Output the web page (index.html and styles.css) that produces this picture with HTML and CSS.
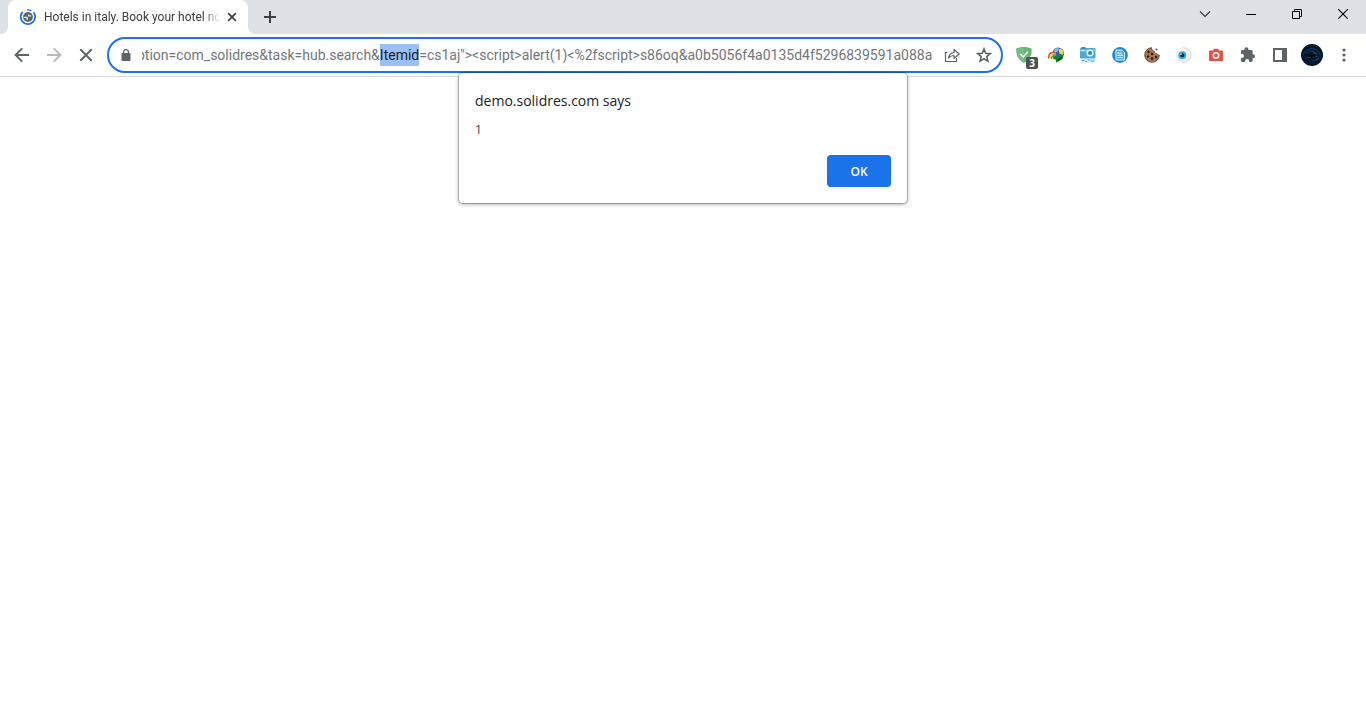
FILE: index.html
```
<!DOCTYPE html>
<html lang="en">
<head>
<meta charset="utf-8">
<title>Hotels in italy. Book your hotel now</title>
<link rel="stylesheet" href="styles.css">
</head>
<body>
<header class="tabstrip">
  <div class="tab">
    <svg class="favicon" width="16" height="16" viewBox="0 0 16 16"><path d="M2.800 2.800A7.200 7.200 0 1 0 13.500 3.300" fill="none" stroke="#1a73e8" stroke-width="1.800"/><path d="M7 .9A7 7 0 0 1 11.500 1.800" fill="none" stroke="#1a73e8" stroke-width="1.300"/><circle cx="8" cy="8" r="4.900" fill="#5f6368"/><path d="M4.200 8.300h2.800v1.800h1M8.500 5.400v1.400h2.700" fill="none" stroke="#e8eaed" stroke-width="1.200"/></svg>
    <span class="tab-title">Hotels in italy. Book your hotel now</span>
    <button class="tab-close" aria-label="Close tab"><svg width="10" height="10" viewBox="0 0 10 10"><path d="M1.2 1.2l7.6 7.6M8.8 1.2L1.2 8.8" stroke="#3c4043" stroke-width="1.7"/></svg></button>
  </div>
  <button class="new-tab" aria-label="New tab"><svg width="12" height="12" viewBox="0 0 12 12"><path d="M6 0v12M0 6h12" stroke="#3c4043" stroke-width="2"/></svg></button>
  <div class="window-controls">
    <button aria-label="Search tabs"><svg width="12" height="12" viewBox="0 0 12 12"><path d="M1 3.5l5 5 5-5" fill="none" stroke="#333" stroke-width="1.1"/></svg></button>
    <button aria-label="Minimize"><svg width="10" height="10" viewBox="0 0 10 10"><path d="M0 5.5h10" stroke="#000"/></svg></button>
    <button aria-label="Restore"><svg width="10" height="10" viewBox="0 0 10 10"><path d="M.5 2.5h7v7h-7zM2.5 2.5v-2h7v7h-2" fill="none" stroke="#000"/></svg></button>
    <button aria-label="Close"><svg width="10" height="10" viewBox="0 0 10 10"><path d="M0 0l10 10M10 0L0 10" stroke="#000" stroke-width="1.1"/></svg></button>
  </div>
</header>

<nav class="toolbar">
  <button class="tool" aria-label="Back"><svg width="16" height="16" viewBox="0 0 16 16"><path d="M15 8H2M8.2 1.4L1.6 8l6.6 6.6" fill="none" stroke="#5f6368" stroke-width="2"/></svg></button>
  <button class="tool" aria-label="Forward"><svg width="16" height="16" viewBox="0 0 16 16"><path d="M1 8h13M7.8 1.4L14.4 8l-6.6 6.6" fill="none" stroke="#bababa" stroke-width="2"/></svg></button>
  <button class="tool" aria-label="Stop loading"><svg width="14" height="14" viewBox="0 0 14 14"><path d="M1.3 1.3l11.4 11.4M12.7 1.3L1.3 12.7" stroke="#5f6368" stroke-width="2"/></svg></button>
  <div class="omnibox">
    <svg class="lock" width="10" height="12" viewBox="0 0 10 12"><rect x=".5" y="4" width="9" height="8" rx="1" fill="#5f6368"/><path d="M2.6 5V3a2.4 2.4 0 0 1 4.8 0v2" fill="none" stroke="#5f6368" stroke-width="1.2"/></svg>
    <input class="address" id="address" type="text" aria-label="Address" spellcheck="false" value="option=com_solidres&amp;task=hub.search&amp;Itemid=cs1aj&quot;&gt;&lt;script&gt;alert(1)&lt;%2fscript&gt;s86oq&amp;a0b5056f4a0135d4f5296839591a088a">
    <button class="box-action" aria-label="Share"><svg width="16" height="16" viewBox="0 0 16 16"><path d="M3.5 5.5h-2v9h11V11" fill="none" stroke="#5f6368" stroke-width="1.2"/><path d="M4.5 11c.5-3.500 2.500-5.300 5.500-5.500V2.500L15.200 7 10 11.300V8.500C7.500 8.500 6 9.300 4.500 11z" fill="none" stroke="#5f6368" stroke-width="1.2" stroke-linejoin="round"/></svg></button>
    <button class="box-action" aria-label="Bookmark this tab"><svg width="16" height="16" viewBox="0 0 16 16"><path d="M8 2l1.700 4.200 4.600.4-3.500 3 1.100 4.500L8 11.700l-3.900 2.400 1.100-4.500-3.500-3 4.600-.4z" fill="none" stroke="#5f6368" stroke-width="1.600"/></svg></button>
  </div>
  <div class="extensions">
    <button class="tool guard" aria-label="Ad blocker, 3 blocked"><svg width="16" height="16" viewBox="0 0 16 16"><path d="M8 0c2.500 0 5.500.6 7.700 1.700 0 6-1.200 10.500-7.700 14.300C1.500 12.200.3 7.700.3 1.700 2.500.6 5.500 0 8 0z" fill="#67b279"/><path d="M8 0v16C1.500 12.200.3 7.700.3 1.700 2.500.6 5.500 0 8 0z" fill="#74bd85"/><path d="M4.300 7l3 3 4.800-5.500" fill="none" stroke="#fff" stroke-width="1.500"/></svg><span class="badge">3</span></button>
    <button class="tool" aria-label="Download manager"><svg width="16" height="16" viewBox="0 0 16 16"><circle cx="10.200" cy="6" r="5.600" fill="#2b62ae"/><path d="M5.500 4C7 1.500 9 .7 11 1.200L10 4 7 6z" fill="#8db9e4"/><path d="M10.500 2.500l2.500-1 2.300 2.500-.6 4-3.200-1.500z" fill="#e2dc55"/><path d="M.8 11.500C0 7 3.500 4.300 7.500 6" fill="none" stroke="#e0502e" stroke-width="1.500"/><path d="M2.200 11.700C1.600 8.500 4.500 6 8 7.200" fill="none" stroke="#f3d53c" stroke-width="1.400"/><path d="M3.600 12c-.3-2.500 1.800-4.300 4.500-3.500" fill="none" stroke="#3fb35f" stroke-width="1.500"/><path d="M5.500 8.500l4 1.500L16 7l-1.500 5L8 15.800V13l-3-1.500z" fill="#13891f"/><path d="M9.500 12.500l5-3.500-1 3-4 2.500z" fill="#07460e"/></svg></button>
    <button class="tool" aria-label="Screenshot"><svg width="16" height="16" viewBox="0 0 16 16"><rect x="0" y="1" width="15.500" height="10.500" rx="1" fill="#4aa9d5"/><path d="M0 2.500h15.500v2H0z" fill="#83cbe5"/><rect x="1.500" y="0" width="4" height="2" fill="#2e8dbc"/><circle cx="10" cy="6" r="3.600" fill="#e9f7fc"/><circle cx="10" cy="6" r="2" fill="#2487b8"/><path d="M1.500 3.500h3" stroke="#e9f7fc"/><rect x="1" y="12" width="14" height="3.500" fill="#c7e8f3"/><path d="M2 13.500h2M5 14.500h2M8 13h2M11 14h3" stroke="#5daed0"/></svg></button>
    <button class="tool" aria-label="Notes"><svg width="16" height="16" viewBox="0 0 16 16"><circle cx="8" cy="8" r="7.900" fill="#2189df"/><path d="M4 3h6l2.500 2.500V13H4z" fill="#53acef" stroke="#e3f4ff"/><path d="M5.500 6h4M5.500 8.300h5.500M5.500 10.500h5.500" stroke="#fff"/></svg></button>
    <button class="tool" aria-label="Cookie editor"><svg width="16" height="16" viewBox="0 0 16 16"><path d="M7.500.7A7.300 7.300 0 1 0 15.300 8c-1.200.3-2.300-.3-2.600-1.300-1.500.2-2.600-.9-2.400-2.300C8.500 4 7.300 2.500 7.500.7z" fill="#ad7552" stroke="#4e3024" stroke-width=".8"/><g fill="#291711"><circle cx="4.500" cy="5" r="1.200"/><circle cx="8" cy="7" r="1.200"/><circle cx="4" cy="9.500" r="1.200"/><circle cx="8" cy="11.500" r="1.300"/><circle cx="12" cy="10" r="1.200"/></g><circle cx="12.500" cy="2.500" r="1" fill="#87553c"/></svg></button>
    <button class="tool" aria-label="Watcher"><svg width="16" height="16" viewBox="0 0 16 16"><circle cx="8" cy="8" r="7.300" fill="#eee" stroke="#d4d4d4" stroke-width=".7"/><circle cx="6.500" cy="7" r="5.500" fill="#f9f9f9"/><circle cx="6.300" cy="8.300" r="4" fill="#38a7df"/><circle cx="6.300" cy="8.300" r="2" fill="#0d273a"/><circle cx="5" cy="7.300" r=".8" fill="#fff"/></svg></button>
    <button class="tool" aria-label="Capture"><svg width="14" height="14" viewBox="0 0 14 14"><path d="M1 2.500h2.700L5 .8h4l1.300 1.700H13a1 1 0 0 1 1 1V12a1 1 0 0 1-1 1H1a1 1 0 0 1-1-1V3.500a1 1 0 0 1 1-1z" fill="#e94f43"/><circle cx="7" cy="7.500" r="2.700" fill="none" stroke="#fff" stroke-width="1.500"/></svg></button>
    <button class="tool" aria-label="Extensions"><svg width="16" height="16" viewBox="0 0 16 16"><path d="M13 7.200h-.4V4.300a1.300 1.300 0 0 0-1.300-1.300H8.400v-.7a2 2 0 0 0-4 0V3H2.300A1.300 1.300 0 0 0 1 4.300v2.500h.8a2.100 2.100 0 0 1 0 4.200H1v2.700A1.300 1.300 0 0 0 2.300 15H5v-.8a2.100 2.100 0 0 1 4.200 0v.8h2.100a1.300 1.300 0 0 0 1.300-1.300v-2.500h.4a2 2 0 0 0 0-4z" fill="#5f6368"/></svg></button>
    <button class="tool" aria-label="Side panel"><svg width="14" height="14" viewBox="0 0 14 14"><path d="M0 0h14v14H0zM2 2v10h7V2z" fill="#5f6368" fill-rule="evenodd"/></svg></button>
    <button class="tool" aria-label="Profile"><svg width="22" height="22" viewBox="0 0 22 22"><circle cx="11" cy="11" r="11" fill="#03162a"/><path d="M2 11c2-5 6-7 11-6 3 .7 5 3 6.500 6" fill="none" stroke="#0b4167"/><path d="M4 14c4-1 8 0 13-2M5 9l4-2 5 1M11 17l6-2" fill="none" stroke="#0b3d63"/><path d="M12 8.500l4 1.500M15 16l3-1.500" stroke="#1b638e"/><path d="M8 10l7 1-5 3z" fill="#010914"/></svg></button>
    <button class="tool" aria-label="Menu"><svg width="4" height="14" viewBox="0 0 4 14"><g fill="#5f6368"><circle cx="2" cy="2" r="1.600"/><circle cx="2" cy="7" r="1.600"/><circle cx="2" cy="12" r="1.600"/></g></svg></button>
  </div>
</nav>

<main class="page">
  <div class="dialog" role="alertdialog" aria-labelledby="origin" aria-describedby="message">
    <h1 class="origin" id="origin">demo.solidres.com says</h1>
    <p class="message" id="message">1</p>
    <button class="ok">OK</button>
  </div>
</main>
<script src="script.js"></script>
</body>
</html>
```
FILE: styles.css
```
* { box-sizing: border-box; }

body {
  margin: 0;
  min-height: 100vh;
  display: flex;
  flex-direction: column;
  background: #fff;
  font-family: "Segoe UI", "Open Sans", "Noto Sans", sans-serif;
}

button {
  border: 0;
  padding: 0;
  background: none;
  font-family: inherit;
  display: flex;
  align-items: center;
  justify-content: center;
}

svg { flex: none; }

.tabstrip {
  height: 34px;
  display: flex;
  padding-left: 8px;
  background: #dee1e6;
}

.tab {
  position: relative;
  width: 240px;
  display: flex;
  align-items: center;
  padding: 0 8px 0 12px;
  background: #fff;
  border-radius: 8px 8px 0 0;
}

.tab::before,
.tab::after {
  content: "";
  position: absolute;
  bottom: 0;
  width: 8px;
  height: 8px;
}

.tab::before {
  right: 100%;
  background: radial-gradient(circle at 0 0, transparent 8px, #fff 8px);
}

.tab::after {
  left: 100%;
  background: radial-gradient(circle at 100% 0, transparent 8px, #fff 8px);
}

.tab-title {
  flex: 1;
  min-width: 0;
  margin: 0 4px 0 8px;
  overflow: hidden;
  white-space: nowrap;
  font-family: Roboto, "Open Sans", sans-serif;
  font-size: 12px;
  line-height: 16px;
  color: #3c4043;
  -webkit-mask-image: linear-gradient(to left, transparent, #000 16px);
  mask-image: linear-gradient(to left, transparent, #000 16px);
}

.tab-close { width: 16px; height: 16px; }

.new-tab { width: 28px; margin-left: 8px; }

.window-controls {
  display: flex;
  height: 28px;
  margin-left: auto;
}

.window-controls button { width: 46px; }

.toolbar {
  height: 43px;
  display: flex;
  align-items: center;
  padding: 0 6px;
  border-bottom: 1px solid #dadce0;
}

.tool {
  width: 32px;
  height: 32px;
  flex: none;
}

.omnibox {
  flex: 1;
  min-width: 0;
  height: 36px;
  display: flex;
  align-items: center;
  margin: 0 5px;
  padding: 0 1px 0 12px;
  border: 2px solid #1a73e8;
  border-radius: 18px;
}

.address {
  flex: 1;
  min-width: 0;
  height: 22px;
  margin: 0 4px 0 11px;
  padding: 0;
  border: 0;
  outline: 0;
  background: none;
  font: 14px/22px Roboto, "Open Sans", sans-serif;
  color: #73777b;
}

.address::selection { background: #9ac1f7; color: #202124; }

.box-action { width: 32px; height: 32px; flex: none; }

.extensions { display: flex; }

.guard { position: relative; }

.badge {
  position: absolute;
  right: 2px;
  bottom: 2px;
  width: 12px;
  height: 12px;
  border-radius: 2px;
  background: #4f5254;
  color: #fff;
  font-size: 10px;
  font-weight: 700;
  line-height: 12px;
  text-align: center;
}

.page { flex: 1; position: relative; }

.dialog {
  position: absolute;
  top: -4px;
  left: 50%;
  transform: translateX(-50%);
  width: 448px;
  padding: 16px;
  display: flex;
  flex-direction: column;
  background: #fff;
  border-radius: 4px;
  box-shadow: 0 0 0 1px #0003, 0 1px 4px #0006;
}

.origin {
  margin: 0;
  font-size: 14px;
  font-weight: 400;
  line-height: 24px;
  color: #202124;
}

.message {
  margin: 7px 0 15px;
  font-size: 12px;
  line-height: 20px;
  color: #3c4043;
}

.ok {
  align-self: flex-end;
  width: 64px;
  height: 32px;
  border-radius: 4px;
  background: #1a73e8;
  color: #fff;
  font-size: 12px;
  font-weight: 600;
}
```
FILE: script.js
```
const address = document.getElementById("address");
const start = address.value.indexOf("Itemid");
address.focus();
address.setSelectionRange(start, start + "Itemid".length);
address.scrollLeft = address.scrollWidth;
```
